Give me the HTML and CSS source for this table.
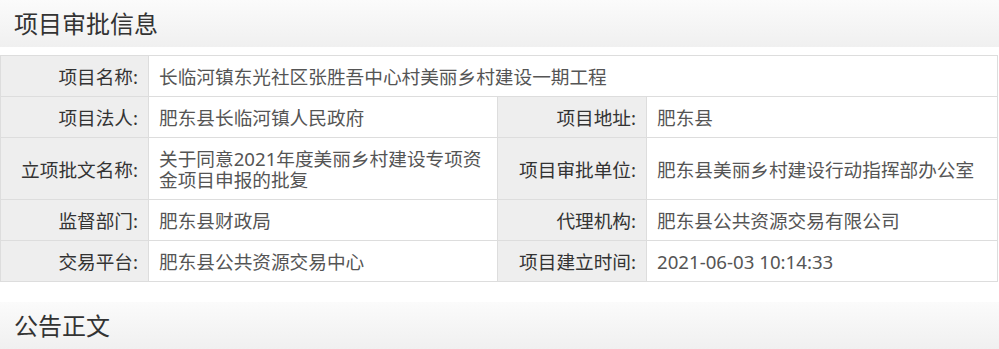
FILE: index.html
```html
<!DOCTYPE html>
<html lang="zh-CN">
<head>
<meta charset="utf-8">
<title>项目审批信息</title>
<link rel="stylesheet" href="styles.css">
</head>
<body>
<div class="section-title">项目审批信息</div>
<table class="info">
  <colgroup>
    <col class="c-label1">
    <col class="c-value1">
    <col class="c-label2">
    <col class="c-value2">
  </colgroup>
  <tr>
    <th>项目名称:</th>
    <td colspan="3">长临河镇东光社区张胜吾中心村美丽乡村建设一期工程</td>
  </tr>
  <tr>
    <th>项目法人:</th>
    <td>肥东县长临河镇人民政府</td>
    <th>项目地址:</th>
    <td>肥东县</td>
  </tr>
  <tr>
    <th>立项批文名称:</th>
    <td>关于同意2021年度美丽乡村建设专项资金项目申报的批复</td>
    <th>项目审批单位:</th>
    <td>肥东县美丽乡村建设行动指挥部办公室</td>
  </tr>
  <tr>
    <th>监督部门:</th>
    <td>肥东县财政局</td>
    <th>代理机构:</th>
    <td>肥东县公共资源交易有限公司</td>
  </tr>
  <tr>
    <th>交易平台:</th>
    <td>肥东县公共资源交易中心</td>
    <th>项目建立时间:</th>
    <td>2021-06-03 10:14:33</td>
  </tr>
</table>
<div class="section-title second">公告正文</div>
</body>
</html>
```
FILE: styles.css
```css
html, body {
  margin: 0;
  padding: 0;
  background: #fff;
}
body {
  font-family: "Noto Sans", "Noto Sans CJK SC", sans-serif;
  color: #333;
}
.section-title {
  height: 47px;
  line-height: 47px;
  padding-left: 14px;
  font-size: 24px;
  color: #333;
  background: linear-gradient(to bottom, #fbfbfb, #f0f0f0);
}
.section-title.second {
  margin-top: 20px;
}
.info {
  margin-top: 8px;
  width: 997px;
  border-collapse: collapse;
  table-layout: fixed;
  font-size: 14pt;
}
.c-label1 { width: 148px; }
.c-value1 { width: 349px; }
.c-label2 { width: 149px; }
.c-value2 { width: 351px; }
.info th,
.info td {
  border: 1px solid #ddd;
  padding: 10px 10px 9px;
  line-height: 21px;
  vertical-align: middle;
}
.info th {
  background: #eee;
  color: #333;
  font-weight: normal;
  text-align: right;
  white-space: nowrap;
}
.info td {
  background: #fff;
  color: #555;
  text-align: left;
}
```
